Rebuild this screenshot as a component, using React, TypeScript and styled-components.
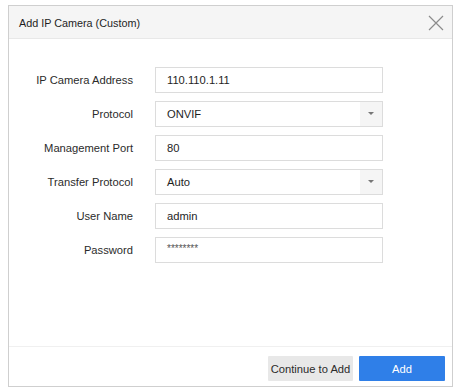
import React from "react";
import styled, { createGlobalStyle } from "styled-components";

const GlobalStyle = createGlobalStyle`
  html, body {
    margin: 0;
    padding: 0;
    background: #fff;
  }
  body {
    font-family: "Liberation Sans", Arial, sans-serif;
    font-size: 11px;
    color: #333;
  }
`;

type Field = {
  label: string;
  value: string;
  select?: boolean;
};

const fields: Field[] = [
  { label: "IP Camera Address", value: "110.110.1.11" },
  { label: "Protocol", value: "ONVIF", select: true },
  { label: "Management Port", value: "80" },
  { label: "Transfer Protocol", value: "Auto", select: true },
  { label: "User Name", value: "admin" },
  { label: "Password", value: "********" },
];

const Dialog = styled.div`
  box-sizing: border-box;
  margin: 5px 0 0 8px;
  width: 445px;
  height: 382px;
  border: 1px solid #cfcfcf;
  display: flex;
  flex-direction: column;
  background: #fff;
`;

const Header = styled.div`
  box-sizing: border-box;
  height: 33px;
  flex: none;
  display: flex;
  align-items: center;
  justify-content: space-between;
  padding: 0 8px 0 10px;
  background: #f5f5f5;
  border-bottom: 1px solid #e8e8e8;
`;

const Title = styled.div`
  font-size: 10.8px;
  color: #1e1e1e;
  padding-top: 1px;
`;

const CloseButton = styled.button`
  width: 17px;
  height: 17px;
  padding: 0;
  border: none;
  background: none;
  display: flex;
  align-items: center;
  justify-content: center;
  cursor: pointer;
  margin-top: 1px;
`;

const Body = styled.div`
  flex: 1;
  padding-top: 28px;
`;

const Form = styled.div`
  display: grid;
  grid-template-columns: 124px 228px;
  column-gap: 22px;
  row-gap: 8px;
  align-items: center;
`;

const Label = styled.div`
  text-align: right;
  font-size: 11.2px;
  color: #2b2b2b;
`;

const Input = styled.div`
  box-sizing: border-box;
  height: 26px;
  border: 1px solid #dcdcdc;
  display: flex;
  align-items: stretch;
  background: #fff;
`;

const Value = styled.div<{ $masked?: boolean }>`
  flex: 1;
  display: flex;
  align-items: center;
  padding-left: 11px;
  font-size: ${(p) => (p.$masked ? "10px" : "11.2px")};
  color: ${(p) => (p.$masked ? "#555" : "#1e1e1e")};
  padding-bottom: ${(p) => (p.$masked ? "3px" : "0")};
`;

const Arrow = styled.div`
  width: 22px;
  background: #f5f5f5;
  display: flex;
  align-items: center;
  justify-content: center;
`;

const Footer = styled.div`
  box-sizing: border-box;
  height: 40px;
  flex: none;
  border-top: 1px solid #f0f0f0;
  display: flex;
  justify-content: flex-end;
  align-items: flex-start;
  gap: 6px;
  padding: 9px 7px 0 0;
`;

const Button = styled.button<{ $primary?: boolean }>`
  box-sizing: border-box;
  height: 25px;
  width: ${(p) => (p.$primary ? "86px" : "85px")};
  border: none;
  border-radius: 1px;
  padding: 0;
  white-space: nowrap;
  font-family: "Liberation Sans", Arial, sans-serif;
  font-size: 11.2px;
  color: ${(p) => (p.$primary ? "#fff" : "#2b2b2b")};
  background: ${(p) => (p.$primary ? "#2f7fe8" : "#e8e8e8")};
  cursor: pointer;
`;

export default function App() {
  return (
    <>
      <GlobalStyle />
      <Dialog>
        <Header>
          <Title>Add IP Camera (Custom)</Title>
          <CloseButton aria-label="Close">
            <svg width="16" height="16" viewBox="0 0 16 16">
              <path
                d="M1 1 L15 15 M15 1 L1 15"
                stroke="#8c8c8c"
                strokeWidth="1.2"
                fill="none"
              />
            </svg>
          </CloseButton>
        </Header>
        <Body>
          <Form>
            {fields.map((f) => (
              <React.Fragment key={f.label}>
                <Label>{f.label}</Label>
                <Input>
                  <Value $masked={f.label === "Password"}>{f.value}</Value>
                  {f.select ? (
                    <Arrow>
                      <svg width="6" height="4" viewBox="0 0 6 4">
                        <path d="M0 0 H6 L3 3 Z" fill="#777" />
                      </svg>
                    </Arrow>
                  ) : null}
                </Input>
              </React.Fragment>
            ))}
          </Form>
        </Body>
        <Footer>
          <Button>Continue to Add</Button>
          <Button $primary>Add</Button>
        </Footer>
      </Dialog>
    </>
  );
}
